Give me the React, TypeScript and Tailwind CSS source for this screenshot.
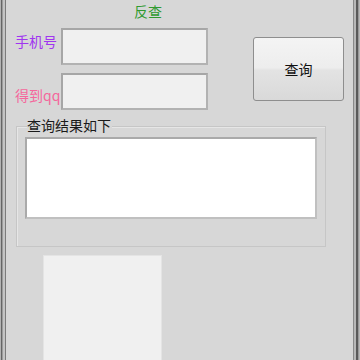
const cjk = "font-['Noto_Sans_CJK_SC','Noto_Sans',sans-serif]";

function FieldBox() {
  return (
    <div className="h-[37px] w-[147px] border-2 border-[#b2b2b2] border-t-[#a6a6a6] border-l-[#a6a6a6] bg-[#f0f0f0]" />
  );
}

export default function App() {
  return (
    <div className={`flex h-[360px] w-[360px] overflow-hidden bg-[#d7d7d7] ${cjk}`}>
      {/* left window frame */}
      <div className="flex h-full">
        <div className="w-px bg-[#b4b4b4]" />
        <div className="w-px bg-[#666666]" />
        <div className="w-px bg-[#9c9c9c]" />
        <div className="w-[2px] bg-[#c4c4c4]" />
        <div className="w-px bg-[#7c7c7c]" />
      </div>

      <div className="flex flex-1 flex-col">
        <div className="mt-[3px] ml-[128px] text-[14px] leading-[16px] text-[#2f9a2f]">反查</div>

        <div className="mt-[9px] flex">
          <div className="flex flex-col">
            <div className="flex">
              <span className="mt-[4px] ml-[9px] w-[46px] text-[14px] leading-[18px] text-[#a035f0]">手机号</span>
              <FieldBox />
            </div>
            <div className="mt-[8px] flex">
              <span className="mt-[13px] ml-[9px] w-[46px] text-[14px] leading-[18px] text-[#f5679c]">得到qq</span>
              <FieldBox />
            </div>
          </div>
          <button className="mt-[9px] ml-[45px] flex h-[64px] w-[91px] items-center justify-center rounded-[3px] border border-[#8e8e8e] bg-[linear-gradient(to_bottom,#f4f4f4_0%,#ededed_48%,#e3e3e3_52%,#d9d9d9_100%)] text-[14px] text-[#111111]">
            查询
          </button>
        </div>

        <div className="relative mt-[16px] ml-[10px] h-[121px] w-[310px] border border-[#c6c6c6] shadow-[inset_1px_1px_0_#e6e6e6]">
          <span className="absolute -top-[11px] left-[10px] bg-[#d7d7d7] pr-[1px] text-[14px] leading-[18px] text-[#1a1a1a]">
            查询结果如下
          </span>
          <div className="mt-[10px] ml-[8px] h-[82px] w-[292px] border-2 border-[#aaaaaa] border-b-[#c0c0c0] border-r-[#c0c0c0] bg-white" />
        </div>

        <div className="mt-[8px] ml-[37px] flex-1 w-[119px] border border-b-0 border-[#e4e4e4] bg-[#f0f0f0]" />
      </div>

      {/* right window frame */}
      <div className="flex h-full">
        <div className="w-px bg-[#8a8a8a]" />
        <div className="w-[2px] bg-[#b8b8b8]" />
        <div className="w-[2px] bg-[#5a5a5a]" />
        <div className="w-px bg-[#9a9a9a]" />
        <div className="w-px bg-[#b8b8b8]" />
      </div>
    </div>
  );
}
